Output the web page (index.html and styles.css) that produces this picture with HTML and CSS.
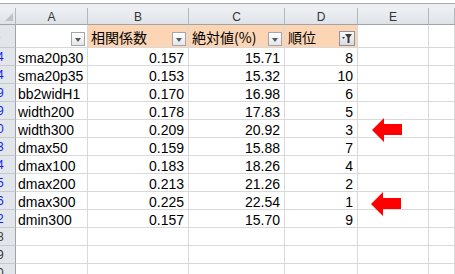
FILE: index.html
```html
<!DOCTYPE html>
<html lang="ja">
<head>
<meta charset="utf-8">
<title>相関係数</title>
<link rel="stylesheet" href="styles.css">
</head>
<body>
<div class="sheet">
  <div class="topbar"></div>
  <div class="grid">
    <!-- column headers -->
    <div class="corner"><span class="corner-tri"></span></div>
    <div class="colhead">A</div>
    <div class="colhead">B</div>
    <div class="colhead">C</div>
    <div class="colhead">D</div>
    <div class="colhead">E</div>
    <div class="colhead"></div>

    <!-- filter row -->
    <div class="rowhead"><span class="rn">1</span></div>
    <div class="cell hcell"><span class="fbtn"><span class="tri"></span></span></div>
    <div class="cell hcell peach"><span class="htext">相関係数</span><span class="fbtn"><span class="tri"></span></span></div>
    <div class="cell hcell peach"><span class="htext">絶対値(%)</span><span class="fbtn"><span class="tri"></span></span></div>
    <div class="cell hcell peach"><span class="htext">順位</span><span class="fbtn on">
      <svg class="funnel" width="10" height="9" viewBox="0 0 10 9"><path d="M3 0h7L7.5 3.5V9H5.5V3.5Z" fill="#3c3c3c"/><path d="M0 3h3L1.5 5Z" fill="#3c3c3c"/></svg>
    </span></div>
    <div class="cell"></div>
    <div class="cell"></div>

    <div class="rowhead blue"><span class="rn">24</span></div>
    <div class="cell txt">sma20p30</div><div class="cell num">0.157</div><div class="cell num">15.71</div><div class="cell num">8</div><div class="cell"></div><div class="cell"></div>

    <div class="rowhead blue"><span class="rn">34</span></div>
    <div class="cell txt">sma20p35</div><div class="cell num">0.153</div><div class="cell num">15.32</div><div class="cell num">10</div><div class="cell"></div><div class="cell"></div>

    <div class="rowhead blue"><span class="rn">39</span></div>
    <div class="cell txt">bb2widH1</div><div class="cell num">0.170</div><div class="cell num">16.98</div><div class="cell num">6</div><div class="cell"></div><div class="cell"></div>

    <div class="rowhead blue"><span class="rn">49</span></div>
    <div class="cell txt">width200</div><div class="cell num">0.178</div><div class="cell num">17.83</div><div class="cell num">5</div><div class="cell"></div><div class="cell"></div>

    <div class="rowhead blue"><span class="rn">50</span></div>
    <div class="cell txt">width300</div><div class="cell num">0.209</div><div class="cell num">20.92</div><div class="cell num">3</div>
    <div class="cell mark"><svg class="arrow arrow-a" width="31" height="25" viewBox="0 0 31 25"><path d="M0 12 12 0v6h18v11H12v7z" fill="#ff0000"/></svg></div>
    <div class="cell"></div>

    <div class="rowhead blue"><span class="rn">53</span></div>
    <div class="cell txt">dmax50</div><div class="cell num">0.159</div><div class="cell num">15.88</div><div class="cell num">7</div><div class="cell"></div><div class="cell"></div>

    <div class="rowhead blue"><span class="rn">64</span></div>
    <div class="cell txt">dmax100</div><div class="cell num">0.183</div><div class="cell num">18.26</div><div class="cell num">4</div><div class="cell"></div><div class="cell"></div>

    <div class="rowhead blue"><span class="rn">65</span></div>
    <div class="cell txt">dmax200</div><div class="cell num">0.213</div><div class="cell num">21.26</div><div class="cell num">2</div><div class="cell"></div><div class="cell"></div>

    <div class="rowhead blue"><span class="rn">66</span></div>
    <div class="cell txt">dmax300</div><div class="cell num">0.225</div><div class="cell num">22.54</div><div class="cell num">1</div>
    <div class="cell mark"><svg class="arrow arrow-b" width="31" height="25" viewBox="0 0 31 25"><path d="M0 12 12 0v6h18v11H12v7z" fill="#ff0000"/></svg></div>
    <div class="cell"></div>

    <div class="rowhead blue"><span class="rn">72</span></div>
    <div class="cell txt">dmin300</div><div class="cell num">0.157</div><div class="cell num">15.70</div><div class="cell num">9</div><div class="cell"></div><div class="cell"></div>

    <div class="rowhead"><span class="rn">78</span></div>
    <div class="cell"></div><div class="cell"></div><div class="cell"></div><div class="cell"></div><div class="cell"></div><div class="cell"></div>

    <div class="rowhead"><span class="rn">79</span></div>
    <div class="cell"></div><div class="cell"></div><div class="cell"></div><div class="cell"></div><div class="cell"></div><div class="cell"></div>

    <div class="rowhead"><span class="rn">80</span></div>
    <div class="cell"></div><div class="cell"></div><div class="cell"></div><div class="cell"></div><div class="cell"></div><div class="cell"></div>
  </div>
</div>
</body>
</html>
```
FILE: styles.css
```css
html, body {
  margin: 0;
  padding: 0;
  background: #ffffff;
}

.sheet {
  width: 455px;
  height: 274px;
  overflow: hidden;
  position: relative;
  font-family: "Liberation Sans", "Noto Sans CJK JP", sans-serif;
  font-size: 14px;
  color: #000000;
}

/* strip above the column headers */
.topbar {
  height: 8px;
  background: linear-gradient(#ffffff 0 3px, #a7aaae 3px 4px, #eceef1 4px 8px);
}

.grid {
  display: grid;
  grid-template-columns: 16px 72px 101px 96px 73px 71px 1fr;
  grid-template-rows: 17px 23px repeat(13, 18px);
}

.grid > div {
  box-sizing: border-box;
  min-width: 0;
}

/* column headers */
.corner,
.colhead {
  background: linear-gradient(#eef0f3, #dfe3e8);
  border-right: 1px solid #b3b8be;
  border-bottom: 1px solid #9fa4aa;
}

.corner {
  position: relative;
}

.corner-tri {
  position: absolute;
  right: 2px;
  bottom: 3px;
  width: 0;
  height: 0;
  border-left: 8px solid transparent;
  border-bottom: 8px solid #bfc3c8;
}

.colhead {
  font-size: 12px;
  line-height: 14px;
  padding-top: 2px;
  text-align: center;
  color: #333333;
}

/* row headers: only the right part of the header column is in view */
.rowhead {
  display: flex;
  justify-content: flex-end;
  overflow: hidden;
  background: #e2e6eb;
  border-right: 1px solid #9fa4aa;
  border-bottom: 1px solid #c6cacf;
  font-size: 12px;
  color: #333333;
}

.rowhead.blue {
  color: #0a1fff;
}

.rn {
  flex: 0 0 36px;
  text-align: center;
  line-height: 16px;
  padding-top: 1px;
}

/* body cells */
.cell {
  border-right: 1px solid #d9d9d9;
  border-bottom: 1px solid #d9d9d9;
  white-space: nowrap;
  overflow: visible;
  line-height: 16px;
  padding-top: 2px;
}

.txt {
  padding-left: 2px;
}

.num {
  text-align: right;
  padding-right: 4px;
}

/* filter header row */
.hcell {
  position: relative;
  padding-top: 0;
}

.peach {
  background: #fcd5b4;
}

.htext {
  display: block;
  font-family: "Noto Sans CJK JP", "Liberation Sans", sans-serif;
  font-size: 14px;
  line-height: 22px;
  padding-top: 1px;
  padding-left: 3px;
}

.fbtn {
  position: absolute;
  right: 2px;
  bottom: 1px;
  width: 14px;
  height: 14px;
  box-sizing: border-box;
  border: 1px solid #a2a5a9;
  background: linear-gradient(#ffffff, #e4e6e9);
  display: flex;
  align-items: center;
  justify-content: center;
}

.tri {
  width: 0;
  height: 0;
  border-left: 3.5px solid transparent;
  border-right: 3.5px solid transparent;
  border-top: 4px solid #555a60;
  margin-top: 1px;
}

.fbtn.on {
  width: 16px;
  height: 15px;
  border-color: #8f9399;
  background: linear-gradient(#f7f8f9, #d9dcdf);
}

/* red markers in column E */
.mark {
  position: relative;
}

.arrow {
  position: absolute;
  display: block;
}

.arrow-a {
  left: 14px;
  top: -2px;
}

.arrow-b {
  left: 13px;
  top: 0px;
}
```
